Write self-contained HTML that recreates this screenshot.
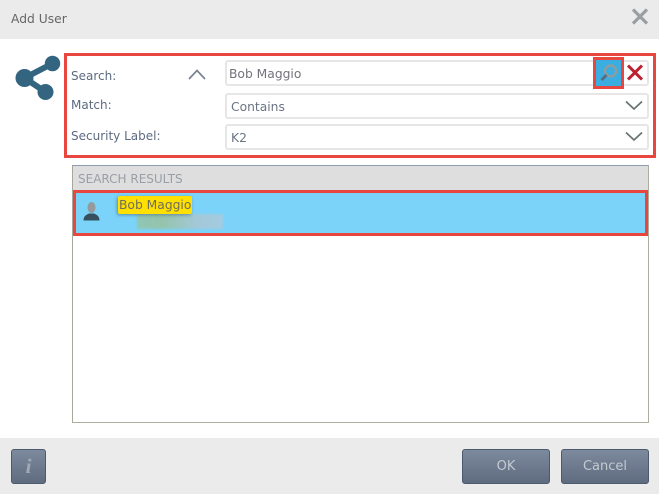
<!DOCTYPE html>
<html><head><meta charset="utf-8">
<style>
html,body{margin:0;padding:0}
body{width:659px;height:494px;background:#fff;position:relative;overflow:hidden;font-family:"DejaVu Sans","Liberation Sans",sans-serif;font-size:12px}
.a{position:absolute;box-sizing:border-box}
.lbl{color:#5d6b80;white-space:nowrap;line-height:16px}
.inp{left:225px;width:424px;border:2px solid #e6e6e6;border-radius:3px;background:#fff}
.txt{white-space:nowrap;line-height:16px;color:#6b7484;font-size:12.3px}
.btn{top:449px;height:35px;border:1px solid #4b5a6e;border-radius:3px;background:linear-gradient(#7d8a9d,#5f6c80);color:#c3c9d1;text-align:center;line-height:33px;font-size:13px}
</style></head><body>
<div class="a" style="left:0;top:0;width:659px;height:39px;background:#ebebeb"></div>
<div class="a" style="left:11px;top:11px;color:#666;line-height:17px;font-size:12.3px;white-space:nowrap">Add User</div>
<svg class="a" style="left:630px;top:7px" width="20" height="20" viewBox="0 0 20 20"><path d="M3 2.500L17 16.500M17 2.500L3 16.500" stroke="#9a9ea3" stroke-width="3.200" fill="none"/></svg>

<svg class="a" style="left:14px;top:54px" width="48" height="48" viewBox="0 0 48 48"><path d="M10.500 24L38.500 9.500M10.500 24L31.500 38" stroke="#336480" stroke-width="6" fill="none"/><circle cx="10.500" cy="24" r="9" fill="#336480"/><circle cx="38.500" cy="9.500" r="7.700" fill="#336480"/><circle cx="31.500" cy="38" r="8" fill="#336480"/></svg>

<div class="a" style="left:64px;top:53px;width:592px;height:105px;border:3.500px solid #e8473f"></div>
<div class="a lbl" style="left:71px;top:68px">Search:</div>
<div class="a lbl" style="left:71px;top:97px">Match:</div>
<div class="a lbl" style="left:71px;top:128px">Security Label:</div>
<svg class="a" style="left:187px;top:68px" width="20" height="12" viewBox="0 0 20 12"><path d="M2 11L10 2.500L18 11" stroke="#7a8292" stroke-width="1.700" fill="none"/></svg>

<div class="a inp" style="top:60px;height:26px"></div>
<div class="a txt" style="left:229px;top:66px;color:#75727a">Bob Maggio</div>
<div class="a inp" style="top:93px;height:26px"></div>
<div class="a txt" style="left:231px;top:99px">Contains</div>
<div class="a inp" style="top:124px;height:26px"></div>
<div class="a txt" style="left:231px;top:130px">K2</div>
<svg class="a" style="left:625px;top:100px" width="18" height="11" viewBox="0 0 18 11"><path d="M1 1.500L9 9L17 1.500" stroke="#66736f" stroke-width="1.700" fill="none"/></svg>
<svg class="a" style="left:625px;top:131px" width="18" height="11" viewBox="0 0 18 11"><path d="M1 1.500L9 9L17 1.500" stroke="#66736f" stroke-width="1.700" fill="none"/></svg>

<div class="a" style="left:593px;top:57px;width:31px;height:32px;background:#3aaee0;border:3px solid #e8473f"></div>
<svg class="a" style="left:599px;top:63px" width="20" height="20" viewBox="0 0 20 20"><circle cx="11.500" cy="8" r="5.500" stroke="#959a9c" stroke-width="2.200" fill="none"/><path d="M7.500 12L2.500 17" stroke="#5c6a80" stroke-width="3" fill="none"/></svg>
<svg class="a" style="left:626px;top:64px" width="18" height="18" viewBox="0 0 18 18"><path d="M2 1.500L16 15.500M16 1.500L2 15.500" stroke="#bd2130" stroke-width="3" fill="none"/></svg>

<div class="a" style="left:72px;top:165px;width:577px;height:258px;border:1px solid #aeae9e;border-top-color:#8d9cb0;border-left-color:#a8a89a;background:#fff"></div>
<div class="a" style="left:73px;top:166px;width:575px;height:24px;background:#dedede"></div>
<div class="a" style="left:78px;top:171px;color:#9a9ea6;line-height:16px;font-size:12px;white-space:nowrap">SEARCH RESULTS</div>
<div class="a" style="left:73px;top:190px;width:575px;height:46px;background:#7bd3fa;border:3px solid #e8473f"></div>
<svg class="a" style="left:83px;top:202px" width="17" height="19" viewBox="0 0 17 19"><ellipse cx="8.500" cy="5.500" rx="4" ry="5.500" fill="#959a9c"/><path d="M0.500 18.500C0.500 13.500 4 12.500 6 11.500L11 11.500C13 12.500 16.500 13.500 16.500 18.500Z" fill="#37505f"/></svg>
<div class="a" style="left:137px;top:214px;width:86px;height:15px;background:linear-gradient(90deg,#8fc6b5,#95c4ac 30%,#a3c8d8 70%,#a4cbe0);filter:blur(1px)"></div>
<div class="a" style="left:118px;top:196px;width:74px;height:18px;background:#ffe000;border-radius:2px;box-shadow:-1px 1px 3px rgba(60,70,90,.5)"></div>
<div class="a txt" style="left:119px;top:197px;color:#6f6f5a">Bob Maggio</div>

<div class="a" style="left:0;top:438px;width:659px;height:56px;background:#ebebeb"></div>
<div class="a btn" style="left:11px;width:35px;font-family:'Liberation Serif',serif;font-style:italic;font-weight:bold;font-size:21px;color:#a0a9b5">i</div>
<div class="a btn" style="left:462px;width:88px">OK</div>
<div class="a btn" style="left:561px;width:88px">Cancel</div>
</body></html>
